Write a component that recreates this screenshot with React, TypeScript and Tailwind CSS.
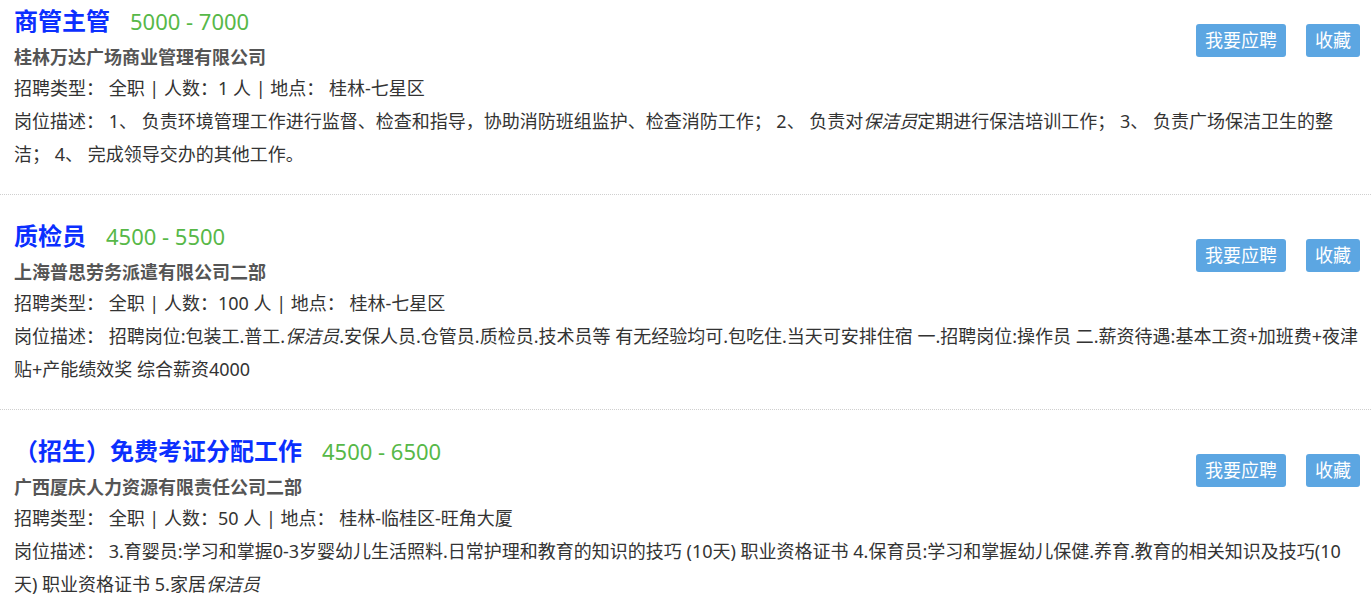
import React from "react";

type Job = {
  title: string;
  salary: string;
  company: string;
  count: number;
  place: string;
  desc: React.ReactNode;
};

const jobs: Job[] = [
  {
    title: "商管主管",
    salary: "5000 - 7000",
    company: "桂林万达广场商业管理有限公司",
    count: 1,
    place: "桂林-七星区",
    desc: (
      <>
        1、 负责环境管理工作进行监督、检查和指导，协助消防班组监护、检查消防工作； 2、 负责对<em>保洁员</em>
        定期进行保洁培训工作； 3、 负责广场保洁卫生的整洁； 4、 完成领导交办的其他工作。
      </>
    ),
  },
  {
    title: "质检员",
    salary: "4500 - 5500",
    company: "上海普思劳务派遣有限公司二部",
    count: 100,
    place: "桂林-七星区",
    desc: (
      <>
        招聘岗位:包装工.普工.<em>保洁员</em>.安保人员.仓管员.质检员.技术员等 有无经验均可.包吃住.当天可安排住宿
        一.招聘岗位:操作员 二.薪资待遇:基本工资+加班费+夜津贴+产能绩效奖 综合薪资4000
      </>
    ),
  },
  {
    title: "（招生）免费考证分配工作",
    salary: "4500 - 6500",
    company: "广西厦庆人力资源有限责任公司二部",
    count: 50,
    place: "桂林-临桂区-旺角大厦",
    desc: (
      <>
        3.育婴员:学习和掌握0-3岁婴幼儿生活照料.日常护理和教育的知识的技巧 (10天) 职业资格证书
        4.保育员:学习和掌握幼儿保健.养育.教育的相关知识及技巧(10天) 职业资格证书 5.家居<em>保洁员</em>
      </>
    ),
  },
];

function JobItem({ job, first }: { job: Job; first?: boolean }) {
  return (
    <li
      className={`border-b border-dotted border-[#cfcfcf] pr-[11px] pl-[14px] pb-[23px] ${
        first ? "pt-0" : "pt-[20px]"
      }`}
    >
      <div className="float-right mt-[24px] flex gap-[20px]">
        <button className="h-[33px] rounded-[3px] bg-[#5ca6e2] px-[9px] text-[18px] leading-[33px] text-white">
          我要应聘
        </button>
        <button className="h-[33px] rounded-[3px] bg-[#5ca6e2] px-[9px] text-[18px] leading-[33px] text-white">
          收藏
        </button>
      </div>
      <div className="flex h-[42px] items-center gap-[20px]">
        <a className="text-[24px] font-bold text-[#0b2fff]">{job.title}</a>
        <span className="text-[22px] text-[#57b848]">{job.salary}</span>
      </div>
      <p className="text-[18px] leading-[30px] font-bold text-[#555]">
        {job.company}
      </p>
      <p className="leading-[33px]">
        招聘类型： 全职 | 人数：{job.count} 人 | 地点： {job.place}
      </p>
      <p className="leading-[33px]">岗位描述： {job.desc}</p>
    </li>
  );
}

export default function App() {
  return (
    <div
      className="h-[603px] overflow-hidden bg-white text-[18px] text-[#333]"
      style={{ fontFamily: '"Noto Sans", "Noto Sans CJK SC", sans-serif' }}
    >
      <ul>
        {jobs.map((job, i) => (
          <JobItem key={job.title} job={job} first={i === 0} />
        ))}
      </ul>
    </div>
  );
}
